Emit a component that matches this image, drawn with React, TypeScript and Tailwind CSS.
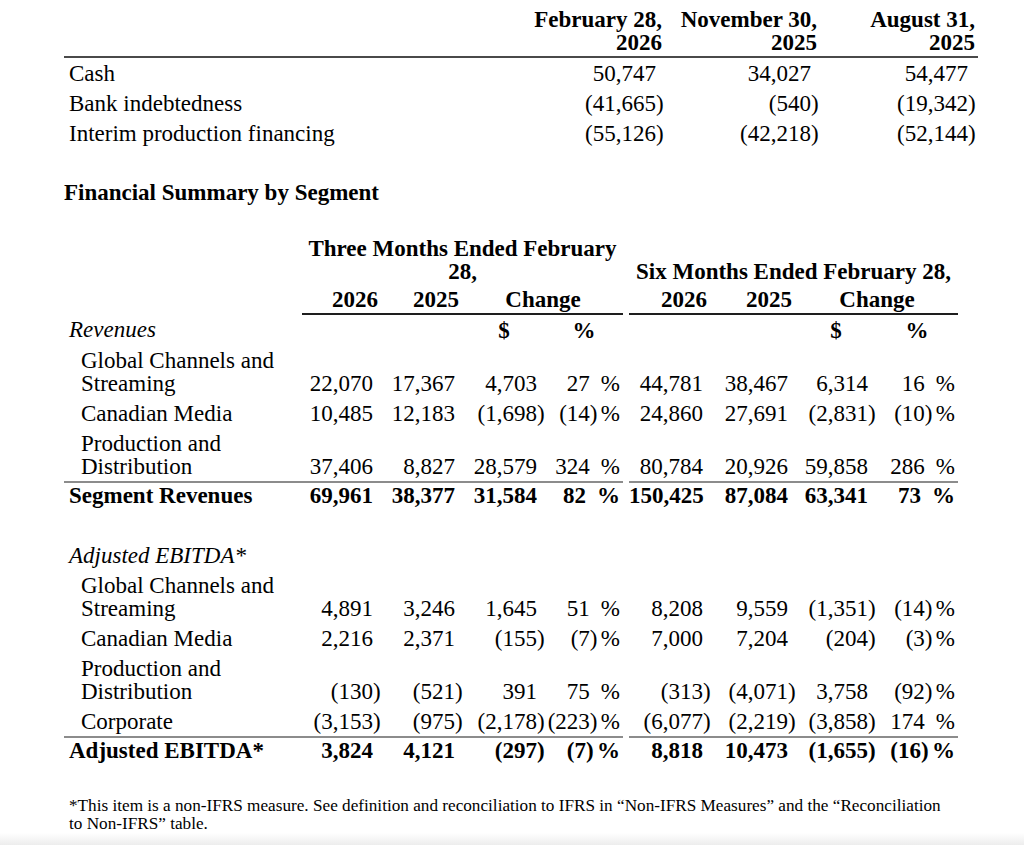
import React from "react";

const topRows = [
  ["Cash", "50,747", "34,027", "54,477"],
  ["Bank indebtedness", "(41,665)", "(540)", "(19,342)"],
  ["Interim production financing", "(55,126)", "(42,218)", "(52,144)"],
];

type Row = {
  label?: React.ReactNode;
  kind: "section" | "item" | "total" | "blank";
  vals?: string[];
};

const segmentRows: Row[] = [
  { label: "Global Channels and\nStreaming", kind: "item", vals: ["22,070", "17,367", "4,703", "27", "44,781", "38,467", "6,314", "16"] },
  { label: "Canadian Media", kind: "item", vals: ["10,485", "12,183", "(1,698)", "(14)", "24,860", "27,691", "(2,831)", "(10)"] },
  { label: "Production and\nDistribution", kind: "item", vals: ["37,406", "8,827", "28,579", "324", "80,784", "20,926", "59,858", "286"] },
  { label: "Segment Revenues", kind: "total", vals: ["69,961", "38,377", "31,584", "82", "150,425", "87,084", "63,341", "73"] },
  { kind: "blank" },
  { label: "Adjusted EBITDA*", kind: "section" },
  { label: "Global Channels and\nStreaming", kind: "item", vals: ["4,891", "3,246", "1,645", "51", "8,208", "9,559", "(1,351)", "(14)"] },
  { label: "Canadian Media", kind: "item", vals: ["2,216", "2,371", "(155)", "(7)", "7,000", "7,204", "(204)", "(3)"] },
  { label: "Production and\nDistribution", kind: "item", vals: ["(130)", "(521)", "391", "75", "(313)", "(4,071)", "3,758", "(92)"] },
  { label: "Corporate", kind: "item", vals: ["(3,153)", "(975)", "(2,178)", "(223)", "(6,077)", "(2,219)", "(3,858)", "174"] },
  { label: "Adjusted EBITDA*", kind: "total", vals: ["3,824", "4,121", "(297)", "(7)", "8,818", "10,473", "(1,655)", "(16)"] },
];

// right-aligned figure; a closing paren hangs into its own slot
function Num({ v, slot = "w-[8px]" }: { v: string; slot?: string }) {
  const neg = v.startsWith("(");
  return (
    <>
      {neg ? v.slice(0, -1) : v}
      <span className={`inline-block ${slot} text-left`}>{neg ? ")" : ""}</span>
    </>
  );
}

function Pct({ v }: { v: string }) {
  const neg = v.startsWith("(");
  return (
    <>
      {neg ? v.slice(0, -1) : v}
      <span className="inline-block w-[7px] text-left">{neg ? ")" : ""}</span>
      <span className="ml-[4px]">%</span>
    </>
  );
}

function Label({ text }: { text: React.ReactNode }) {
  if (typeof text !== "string") return <>{text}</>;
  const parts = text.split("\n");
  return (
    <>
      {parts.map((p, i) => (
        <React.Fragment key={i}>
          {i > 0 && <br />}
          {p}
        </React.Fragment>
      ))}
    </>
  );
}

function SegmentRow({ row }: { row: Row }) {
  if (row.kind === "blank") {
    return (
      <tr>
        <td colSpan={10} className="py-[3.5px]">&nbsp;</td>
      </tr>
    );
  }
  if (row.kind === "section") {
    return (
      <tr>
        <td colSpan={10} className="py-[3.5px] pl-[5px] italic">{row.label}</td>
      </tr>
    );
  }
  const total = row.kind === "total";
  const v = row.vals ?? [];
  const rule = total ? "border-t-2 border-[#8c8c8c] pt-[1px] pb-[3px]" : "py-[3.5px]";
  const cell = `text-right align-bottom whitespace-nowrap ${rule}`;
  return (
    <tr className={total ? "font-bold" : ""}>
      <td className={`align-bottom ${total ? "pl-[5px]" : "pl-[17px]"} ${rule}`}>
        <Label text={row.label} />
      </td>
      <td className={cell}><Num v={v[0]} /></td>
      <td className={cell}><Num v={v[1]} /></td>
      <td className={cell}><Num v={v[2]} /></td>
      <td className={`${cell} pr-[3px]`}><Pct v={v[3]} /></td>
      <td></td>
      <td className={cell}><Num v={v[4]} /></td>
      <td className={cell}><Num v={v[5]} /></td>
      <td className={cell}><Num v={v[6]} /></td>
      <td className={`${cell} pr-[3px]`}><Pct v={v[7]} /></td>
    </tr>
  );
}

export default function App() {
  return (
    <div className="min-h-[845px] w-[1024px] bg-white font-['Liberation_Serif',serif] text-[23px] leading-[23px] text-black flex flex-col">
      <div className="pt-[8px] pl-[64px]">
        <table className="w-[914px] table-fixed border-collapse">
          <colgroup>
            <col className="w-[466px]" />
            <col className="w-[135px]" />
            <col className="w-[155px]" />
            <col className="w-[158px]" />
          </colgroup>
          <thead>
            <tr className="font-bold">
              <th className="border-b-2 border-[#4a4a4a] pb-[2px]"></th>
              <th className="border-b-2 border-[#4a4a4a] pb-[2px] pr-[3px] text-right align-bottom whitespace-nowrap">February 28,<br />2026</th>
              <th className="border-b-2 border-[#4a4a4a] pb-[2px] pr-[3px] text-right align-bottom whitespace-nowrap">November 30,<br />2025</th>
              <th className="border-b-2 border-[#4a4a4a] pb-[2px] pr-[3px] text-right align-bottom whitespace-nowrap">August 31,<br />2025</th>
            </tr>
          </thead>
          <tbody>
            {topRows.map((r) => (
              <tr key={r[0]}>
                <td className="py-[3.5px] pl-[5px]">{r[0]}</td>
                <td className="py-[3.5px] text-right"><Num v={r[1]} slot="w-[9px]" /></td>
                <td className="py-[3.5px] text-right"><Num v={r[2]} slot="w-[9px]" /></td>
                <td className="py-[3.5px] pr-[1px] text-right"><Num v={r[3]} slot="w-[9px]" /></td>
              </tr>
            ))}
          </tbody>
        </table>
      </div>

      <h2 className="mt-[33px] pl-[64px] font-bold">Financial Summary by Segment</h2>

      <div className="mt-[33px] pl-[64px]">
        <table className="w-[894px] table-fixed border-collapse">
          <colgroup>
            <col className="w-[238px]" />
            <col className="w-[79px]" />
            <col className="w-[82px]" />
            <col className="w-[82px]" />
            <col className="w-[78px]" />
            <col className="w-[6px]" />
            <col className="w-[82px]" />
            <col className="w-[85px]" />
            <col className="w-[80px]" />
            <col className="w-[82px]" />
          </colgroup>
          <thead className="font-bold">
            <tr>
              <th></th>
              <th colSpan={4} className="pb-[5px] text-center align-bottom">Three Months Ended February<br />28,</th>
              <th></th>
              <th colSpan={4} className="pb-[5px] text-center align-bottom whitespace-nowrap">Six Months Ended February 28,</th>
            </tr>
            <tr>
              <th></th>
              <th className="border-b-2 border-[#1e1e1e] pb-[2px] pr-[3px] text-right">2026</th>
              <th className="border-b-2 border-[#1e1e1e] pb-[2px] pr-[4px] text-right">2025</th>
              <th colSpan={2} className="border-b-2 border-[#1e1e1e] pb-[2px] text-center">Change</th>
              <th></th>
              <th className="border-b-2 border-[#1e1e1e] pb-[2px] pr-[4px] text-right">2026</th>
              <th className="border-b-2 border-[#1e1e1e] pb-[2px] pr-[4px] text-right">2025</th>
              <th colSpan={2} className="border-b-2 border-[#1e1e1e] pb-[2px] text-center">Change</th>
            </tr>
            <tr>
              <th className="py-[3.5px] pl-[5px] text-left font-normal italic">Revenues</th>
              <th></th>
              <th></th>
              <th className="py-[3.5px] text-center">$</th>
              <th className="py-[3.5px] text-center">%</th>
              <th></th>
              <th></th>
              <th></th>
              <th className="py-[3.5px] text-center">$</th>
              <th className="py-[3.5px] text-center">%</th>
            </tr>
          </thead>
          <tbody>
            {segmentRows.map((row, i) => (
              <SegmentRow key={i} row={row} />
            ))}
          </tbody>
        </table>
      </div>

      <p className="mt-[32px] pl-[69px] pr-[60px] text-[17.2px] leading-[18px]">
        *This item is a non-IFRS measure. See definition and reconciliation to IFRS in “Non-IFRS Measures” and the “Reconciliation
        <br />
        to Non-IFRS” table.
      </p>

      <div className="mt-auto h-[14px] bg-linear-to-b from-white to-[#eaeaea]"></div>
    </div>
  );
}
